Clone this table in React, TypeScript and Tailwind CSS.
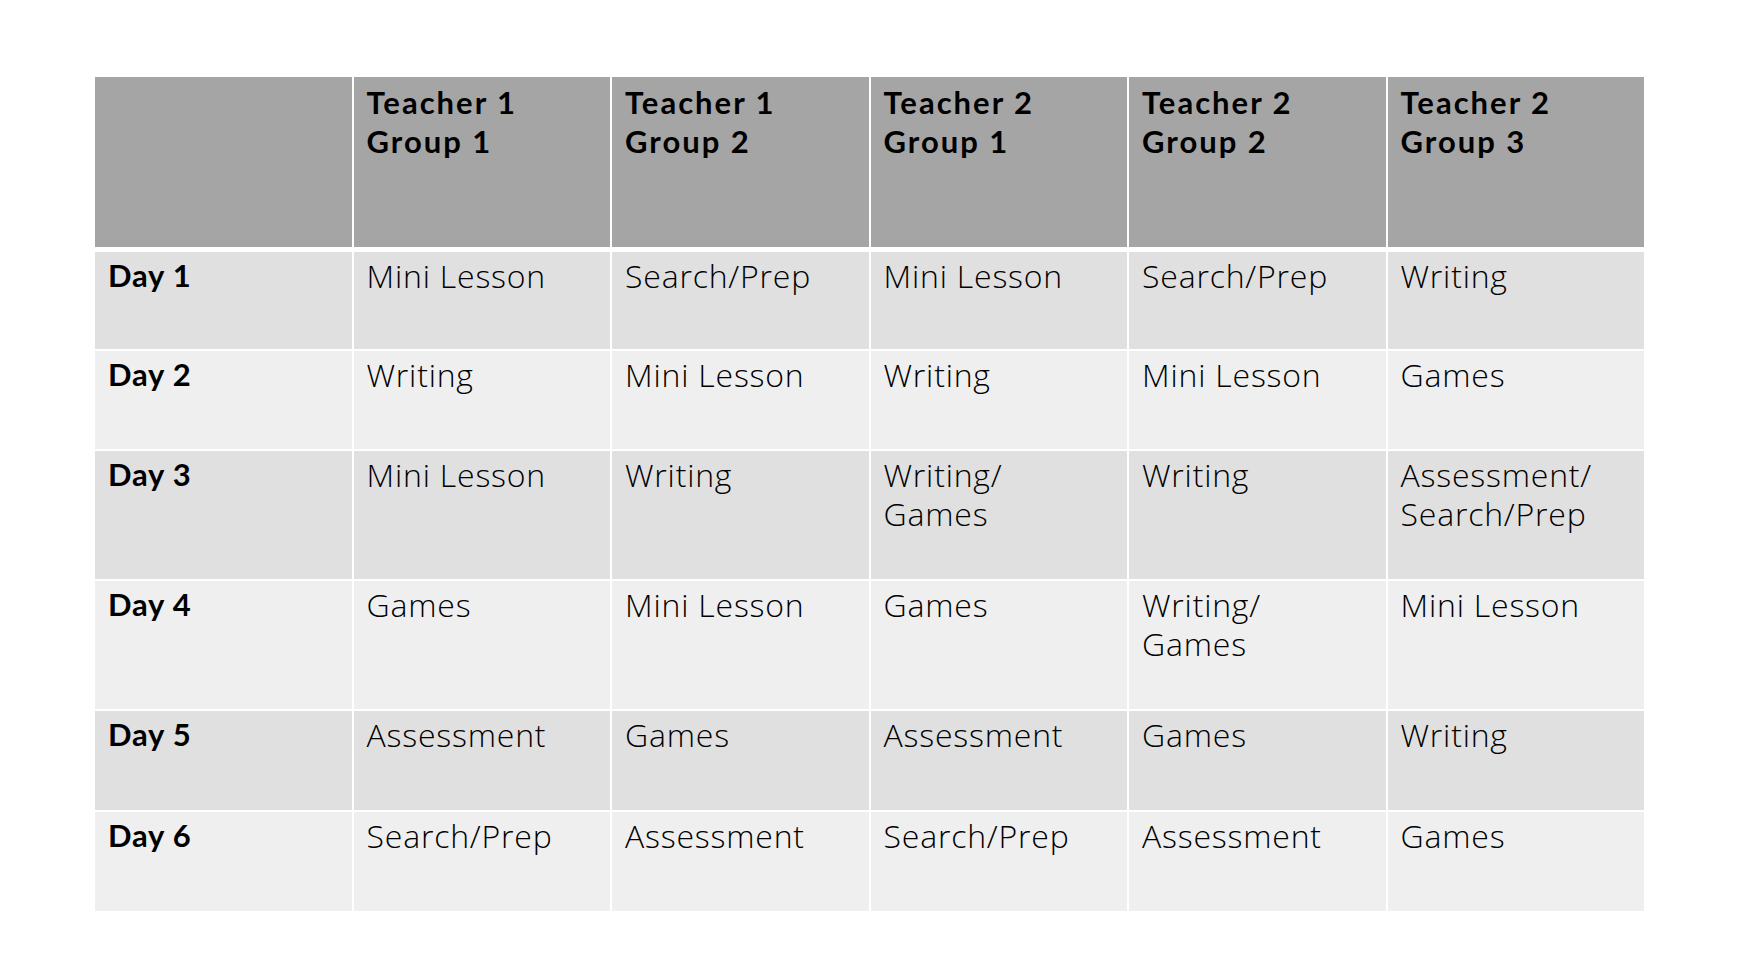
const headers = [
  ['Teacher 1', 'Group 1'],
  ['Teacher 1', 'Group 2'],
  ['Teacher 2', 'Group 1'],
  ['Teacher 2', 'Group 2'],
  ['Teacher 2', 'Group 3'],
];

const rows = [
  { day: 'Day 1', h: 'h-[97px]', bg: 'bg-[#e0e0e0]', cells: ['Mini Lesson', 'Search/Prep', 'Mini Lesson', 'Search/Prep', 'Writing'] },
  { day: 'Day 2', h: 'h-[98px]', bg: 'bg-[#efefef]', cells: ['Writing', 'Mini Lesson', 'Writing', 'Mini Lesson', 'Games'] },
  { day: 'Day 3', h: 'h-[128px]', bg: 'bg-[#e0e0e0]', cells: ['Mini Lesson', 'Writing', 'Writing/\nGames', 'Writing', 'Assessment/\nSearch/Prep'] },
  { day: 'Day 4', h: 'h-[128px]', bg: 'bg-[#efefef]', cells: ['Games', 'Mini Lesson', 'Games', 'Writing/\nGames', 'Mini Lesson'] },
  { day: 'Day 5', h: 'h-[99px]', bg: 'bg-[#e0e0e0]', cells: ['Assessment', 'Games', 'Assessment', 'Games', 'Writing'] },
  { day: 'Day 6', h: 'h-[99px]', bg: 'bg-[#efefef]', cells: ['Search/Prep', 'Assessment', 'Search/Prep', 'Assessment', 'Games'] },
];

export default function App() {
  return (
    <div className="w-[1738px] h-[978px] bg-white pt-[77px] pl-[95px] font-['Lato',sans-serif] text-black">
      <div className="w-[1549px]">
        <div className="grid grid-cols-6 gap-x-[2px] h-[170px]">
          <div className="bg-[#a5a5a5]"></div>
          {headers.map((hd, i) => (
            <div key={i} className="bg-[#a5a5a5] px-[13px] pt-[6px] text-[31px] leading-[39px] font-bold tracking-[2px]">
              <div>{hd[0]}</div>
              <div>{hd[1]}</div>
            </div>
          ))}
        </div>
        <div className="mt-[5px] flex flex-col gap-y-[2px]">
          {rows.map((r) => (
            <div key={r.day} className={`grid grid-cols-6 gap-x-[2px] ${r.h}`}>
              <div className={`${r.bg} px-[13px] pt-[4px] text-[31px] leading-[39px] font-bold tracking-[0.8px]`}>{r.day}</div>
              {r.cells.map((c, i) => (
                <div key={i} className={`${r.bg} px-[13px] pt-[4px] text-[32px] leading-[39px] font-['Open_Sans',sans-serif] font-light tracking-[0.8px] whitespace-pre-line`}>
                  {c}
                </div>
              ))}
            </div>
          ))}
        </div>
      </div>
    </div>
  );
}
